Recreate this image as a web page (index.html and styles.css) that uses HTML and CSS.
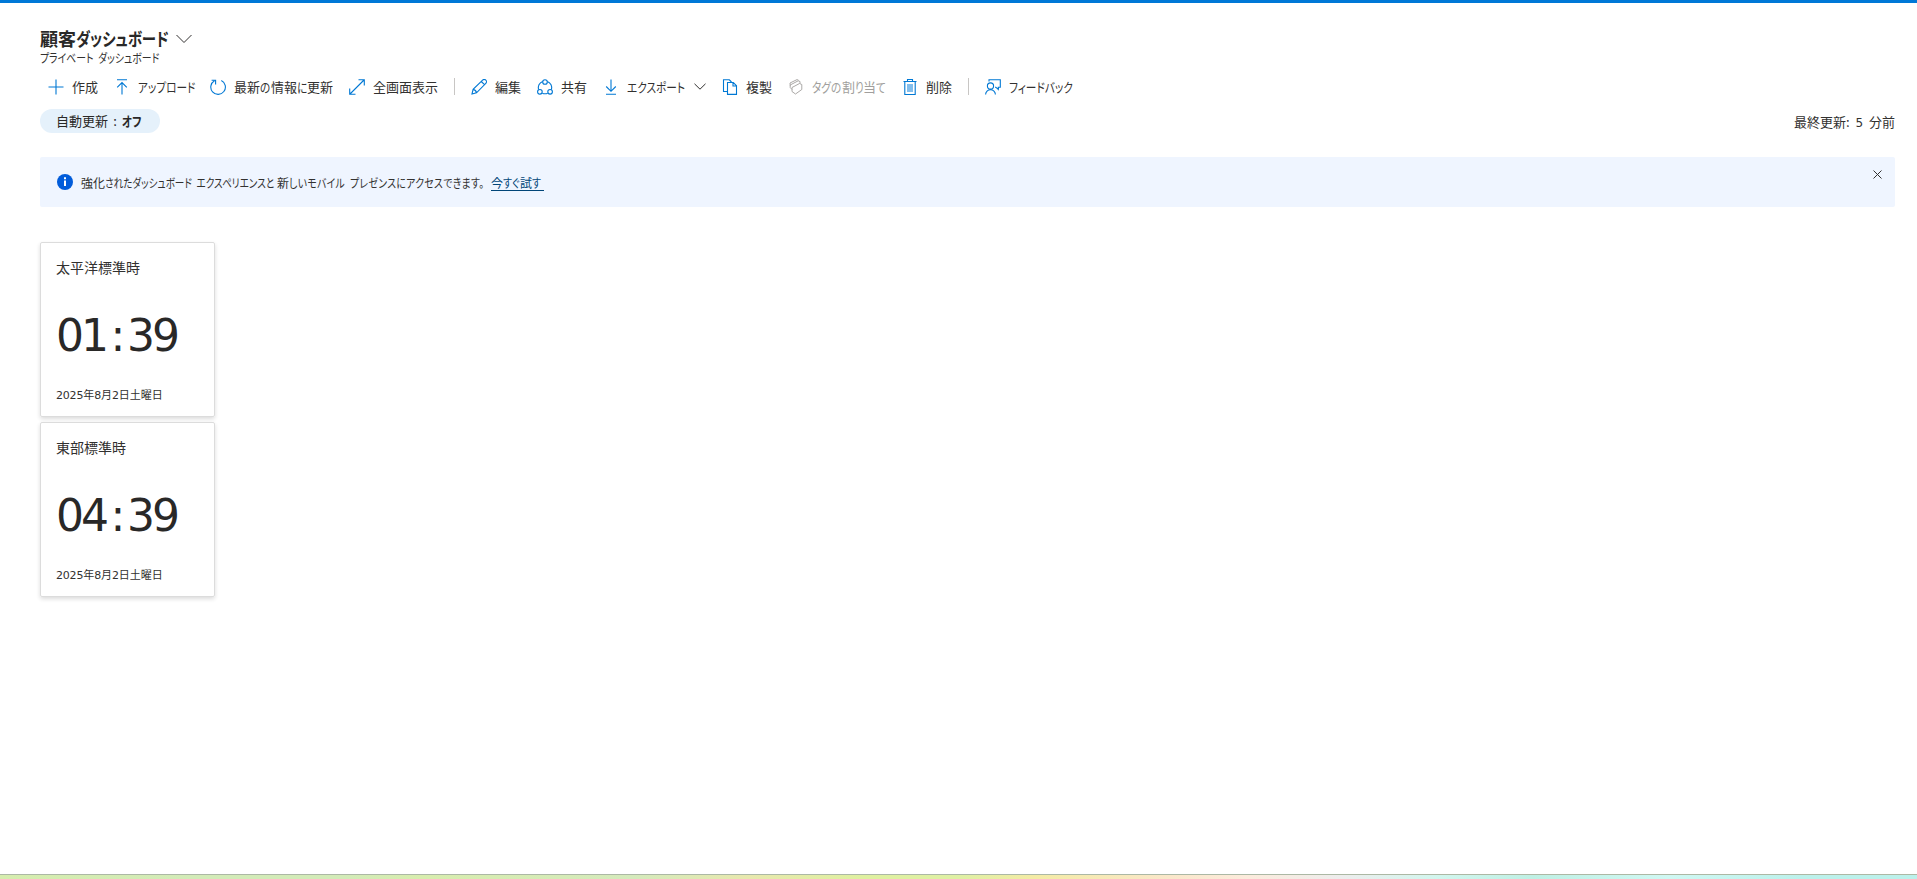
FILE: index.html
```
<!DOCTYPE html>
<html lang="ja">
<head>
  <meta charset="UTF-8" />
  <meta name="viewport" content="width=device-width, initial-scale=1" />
  <title>顧客ダッシュボード</title>
  <link rel="stylesheet" href="styles.css">
</head>
<body>
  <header class="header">
    <h1>顧客<span class="kana w92">ダッシュボード</span>
      <svg class="title-chevron" width="16" height="10" viewBox="0 0 16 10"><path d="M.5 1l7.500 7.500L15.500 1"/></svg>
    </h1>
    <p class="subtitle"><span class="kana w120">プライベート ダッシュボード</span></p>
  </header>

  <!-- Command bar -->
  <nav class="toolbar">
    <a class="item"><svg class="icon" viewBox="0 0 16 16"><path d="M8 .5v15M.5 8h15"/></svg><span class="label w26">作成</span></a>
    <a class="item"><svg class="icon" viewBox="0 0 16 16"><path d="M3 .7h10M8 15.500V4M3.200 8.300L8 3.500l4.800 4.800"/></svg><span class="label w56 kana">アップロード</span></a>
    <a class="item"><svg class="icon" viewBox="0 0 16 16"><path d="M11.300 1.500A7.300 7.300 0 1 1 4.500 1.700M1.600 1.200h4v4.300"/></svg><span class="label w99">最新<span class="kana w11">の</span>情報<span class="kana w10">に</span>更新</span></a>
    <a class="item"><svg class="icon" viewBox="0 0 16 16"><path d="M1 15L15 1M9.500.7h5.800v5.800M.7 9.500v5.800h5.800"/></svg><span class="label w65">全画面表示</span></a>
    <span class="separator"></span>
    <a class="item"><svg class="icon" viewBox="0 0 16 16"><path d="M1 15l1.100-4.600L11.600 1.200a2.100 2.100 0 0 1 3.200 3.200L5.500 13.800zM10.300 2.500l3.200 3.200M2.100 10.400c1.600.2 3.100 1.700 3.400 3.400"/></svg><span class="label w26">編集</span></a>
    <a class="item"><svg class="icon" viewBox="0 0 16 16"><circle cx="8" cy="3" r="2.300"/><circle cx="2.900" cy="12.800" r="2.300"/><circle cx="13.100" cy="12.800" r="2.300"/><path d="M5.600 2.500A6.800 6.800 0 0 0 1.500 10.700M10.400 2.500a6.800 6.800 0 0 1 4.100 8.200M5.300 14.200a6.800 6.800 0 0 0 5.400 0"/></svg><span class="label w26">共有</span></a>
    <a class="item"><svg class="icon" viewBox="0 0 16 16"><path d="M3 15.300h10M8 .5V12M3.200 7.500L8 12.300l4.800-4.800"/></svg><span class="label w59 kana">エクスポート</span><svg class="chevron" width="12" height="7" viewBox="0 0 12 7"><path d="M.5.8L6 6.200 11.500.8"/></svg></a>
    <a class="item"><svg class="icon" viewBox="0 0 16 16"><path d="M5.500 12.500h-4V.8h5.800l2.200 2.200M5.500 3.500h5.800l3.200 3.200v8.700h-9zM11 3.800V7h3.300"/></svg><span class="label w26">複製</span></a>
    <a class="item disabled"><svg class="icon thin" viewBox="0 0 16 16"><path d="M4 8.500l7.500-4 2.300 1v5L7.500 15 4 12.500zM4 10.500l-1.800-2V6l8-4.200 1.800.7v2M2.200 6.500L2 4 9 .6l1.500.6"/></svg><span class="label w74"><span class="kana w30">タグの</span>割<span class="kana w8">り</span>当<span class="kana w10">て</span></span></a>
    <a class="item"><svg class="icon" viewBox="0 0 16 16"><path class="fill" d="M5 5h6v8H5z"/><path d="M1.500 2.500h13M5.500 2.500v-2h5v2M2.800 2.500v13h10.400v-13"/></svg><span class="label w26">削除</span></a>
    <span class="separator"></span>
    <a class="item"><svg class="icon" viewBox="0 0 16 16"><circle cx="5.500" cy="7" r="3.100"/><path d="M.6 15.500a4.900 4.900 0 0 1 9.800 0M4 2.500V.7h11.300v7.500h-2v2.300L10.800 8.200H10"/></svg><span class="label w65 kana">フィードバック</span></a>
  </nav>

  <div class="status">
    <div class="pill">自動更新<span class="colon">:</span><b class="kana w20">オフ</b></div>
    <div class="updated">最終更新: <span class="num">5</span> 分前</div>
  </div>

  <div class="banner">
    <svg class="info" width="16" height="16" viewBox="0 0 16 16"><circle cx="8" cy="8" r="8"/><path d="M7 6.500h2V12H7zM7 3.200h2v2H7z"/></svg>
    <p class="message">強化<span class="kana w172">されたダッシュボード エクスペリエンスと</span>新<span class="kana w196">しいモバイル プレゼンスにアクセスできます。</span></p>
    <a class="link">今<span class="kana w17">すぐ</span>試<span class="kana w11">す</span></a>
    <svg class="close" width="9" height="9" viewBox="0 0 9 9"><path d="M.5.5l8 8M8.500.5l-8 8"/></svg>
  </div>

  <!-- Clock tiles -->
  <main class="tiles">
    <section class="tile">
      <h2>太平洋標準時</h2>
      <div class="time">01<i>:</i>39</div>
      <div class="date"><span class="num">2025</span>年<span class="num">8</span>月<span class="num">2</span>日土曜日</div>
    </section>
    <section class="tile">
      <h2>東部標準時</h2>
      <div class="time">04<i>:</i>39</div>
      <div class="date"><span class="num">2025</span>年<span class="num">8</span>月<span class="num">2</span>日土曜日</div>
    </section>
  </main>

  <footer class="strip"></footer>
</body>
</html>
```
FILE: styles.css
```
* {
  box-sizing: border-box;
}
body {
  display: flex;
  flex-direction: column;
  height: 879px;
  margin: 0;
  border-top: 3px solid #0078d7;
  background: #fff;
  color: #323130;
  font-family: "Noto Sans CJK JP", sans-serif;
  font-size: 13px;
  overflow: hidden;
}
h1, h2, p {
  margin: 0;
}
svg {
  flex: none;
  fill: none;
  stroke: #323130;
}
/* condensed kana, like a UI font */
.kana {
  display: inline-block;
  font-feature-settings: "palt";
  transform: scaleX(0.82);
  transform-origin: 0 50%;
  white-space: nowrap;
  word-spacing: 3px;
}
.header {
  height: 67px;
  padding: 23px 22px 0 40px;
}
h1 {
  display: flex;
  align-items: center;
  height: 24px;
  color: #292827;
  font-size: 18px;
  font-weight: 700;
  line-height: 24px;
}
h1 .kana {
  transform: scaleX(0.8);
}
.title-chevron {
  margin: 1px 0 0 8px;
}
.subtitle {
  font-size: 12px;
  line-height: 16px;
}

/* toolbar */
.toolbar {
  display: flex;
  align-items: center;
  gap: 16px;
  height: 33px;
  padding-left: 48px;
}
.item {
  display: flex;
  align-items: center;
  gap: 8px;
}
.icon {
  width: 16px;
  height: 16px;
  stroke: #0078d4;
  stroke-width: 1.1;
}
.icon .fill {
  fill: #83beec;
  stroke: none;
}
.icon.thin {
  stroke-width: 0.9;
}
.label {
  line-height: 20px;
  white-space: nowrap;
}
.w8 { width: 8px; }
.w10 { width: 10px; }
.w11 { width: 11px; }
.w17 { width: 17px; }
.w20 { width: 20px; }
.w26 { width: 26px; }
.w30 { width: 30px; }
.w56 { width: 56px; }
.w59 { width: 59px; }
.w65 { width: 65px; }
.w74 { width: 74px; }
.w92 { width: 92px; }
.w99 { width: 99px; }
.w120 { width: 120px; }
.w172 { width: 172px; }
.w196 { width: 196px; }
.separator {
  width: 1px;
  height: 17px;
  background: #c8c6c4;
}
.disabled {
  color: #a19f9d;
}
.disabled .icon {
  stroke: #a19f9d;
}

.status {
  display: flex;
  justify-content: space-between;
  height: 54px;
  padding: 6px 22px 0 40px;
}
.pill {
  width: 120px;
  height: 24px;
  padding-left: 16px;
  border-radius: 12px;
  background: #e5f1fb;
  color: #292827;
  line-height: 24px;
  white-space: nowrap;
}
.colon {
  display: inline-block;
  width: 14px;
  text-align: center;
}
.updated {
  line-height: 26px;
  word-spacing: 3px;
}
.num {
  font-family: "DejaVu Sans", sans-serif;
  font-size: 12px;
}

/* notification */
.banner {
  display: flex;
  align-items: center;
  height: 50px;
  margin: 0 22px 0 40px;
  padding: 0 13px 0 17px;
  border-radius: 2px;
  background: #eff5ff;
  font-size: 12px;
}
.info {
  stroke: none;
}
.info circle {
  fill: #015cda;
}
.info path {
  fill: #fff;
}
.message {
  width: 404px;
  margin-left: 8px;
  white-space: nowrap;
}
.message .w172 {
  transform: scaleX(0.8);
}
.message .w196 {
  letter-spacing: 0.4px;
}
.link {
  width: 53px;
  margin: 1px 0 0 6px;
  border-bottom: 1px solid #004578;
  color: #004578;
  line-height: 15px;
  white-space: nowrap;
}
.close {
  align-self: flex-start;
  margin: 13px 0 0 auto;
}

/* tiles */
.tiles {
  display: flex;
  flex: 1;
  flex-direction: column;
  gap: 5px;
  padding: 35px 0 0 40px;
}
.tile {
  width: 175px;
  height: 175px;
  padding: 14px 15px;
  border: 1px solid #dcdcdc;
  border-radius: 2px;
  box-shadow: 0 2px 4px rgba(0, 0, 0, 0.14);
}
.tile h2 {
  font-size: 14px;
  font-weight: 400;
  line-height: 20px;
}
.time {
  margin-top: 29px;
  color: #292827;
  font-family: "DejaVu Sans", sans-serif;
  font-size: 44px;
  letter-spacing: -3px;
  line-height: 60px;
}
.time i {
  display: inline-block;
  width: 21px;
  font-style: normal;
  text-align: center;
}
.date {
  margin-top: 20px;
  font-size: 11px;
  line-height: 16px;
  white-space: nowrap;
}
.date .num {
  font-size: 11px;
  letter-spacing: -0.200px;
}

.strip {
  height: 5px;
  border-top: 1px solid #acb8a4;
  background: linear-gradient(90deg, #d6edae 0, #d3ebb8 10%, #d3ebb8 18%, #d8edae 22%, #d5eabc 33%, #e8e8ae 39%, #dff0a0 45%, #dff0a4 50%, #f4eba5 54%, #fae7ca 61%, #fcebdc 65%, #ededed 70%, #d2f6ee 75%, #bff0e4 80%, #d0f8f3 87%, #bcf1eb 94%, #bcf1eb 100%);
}
```
